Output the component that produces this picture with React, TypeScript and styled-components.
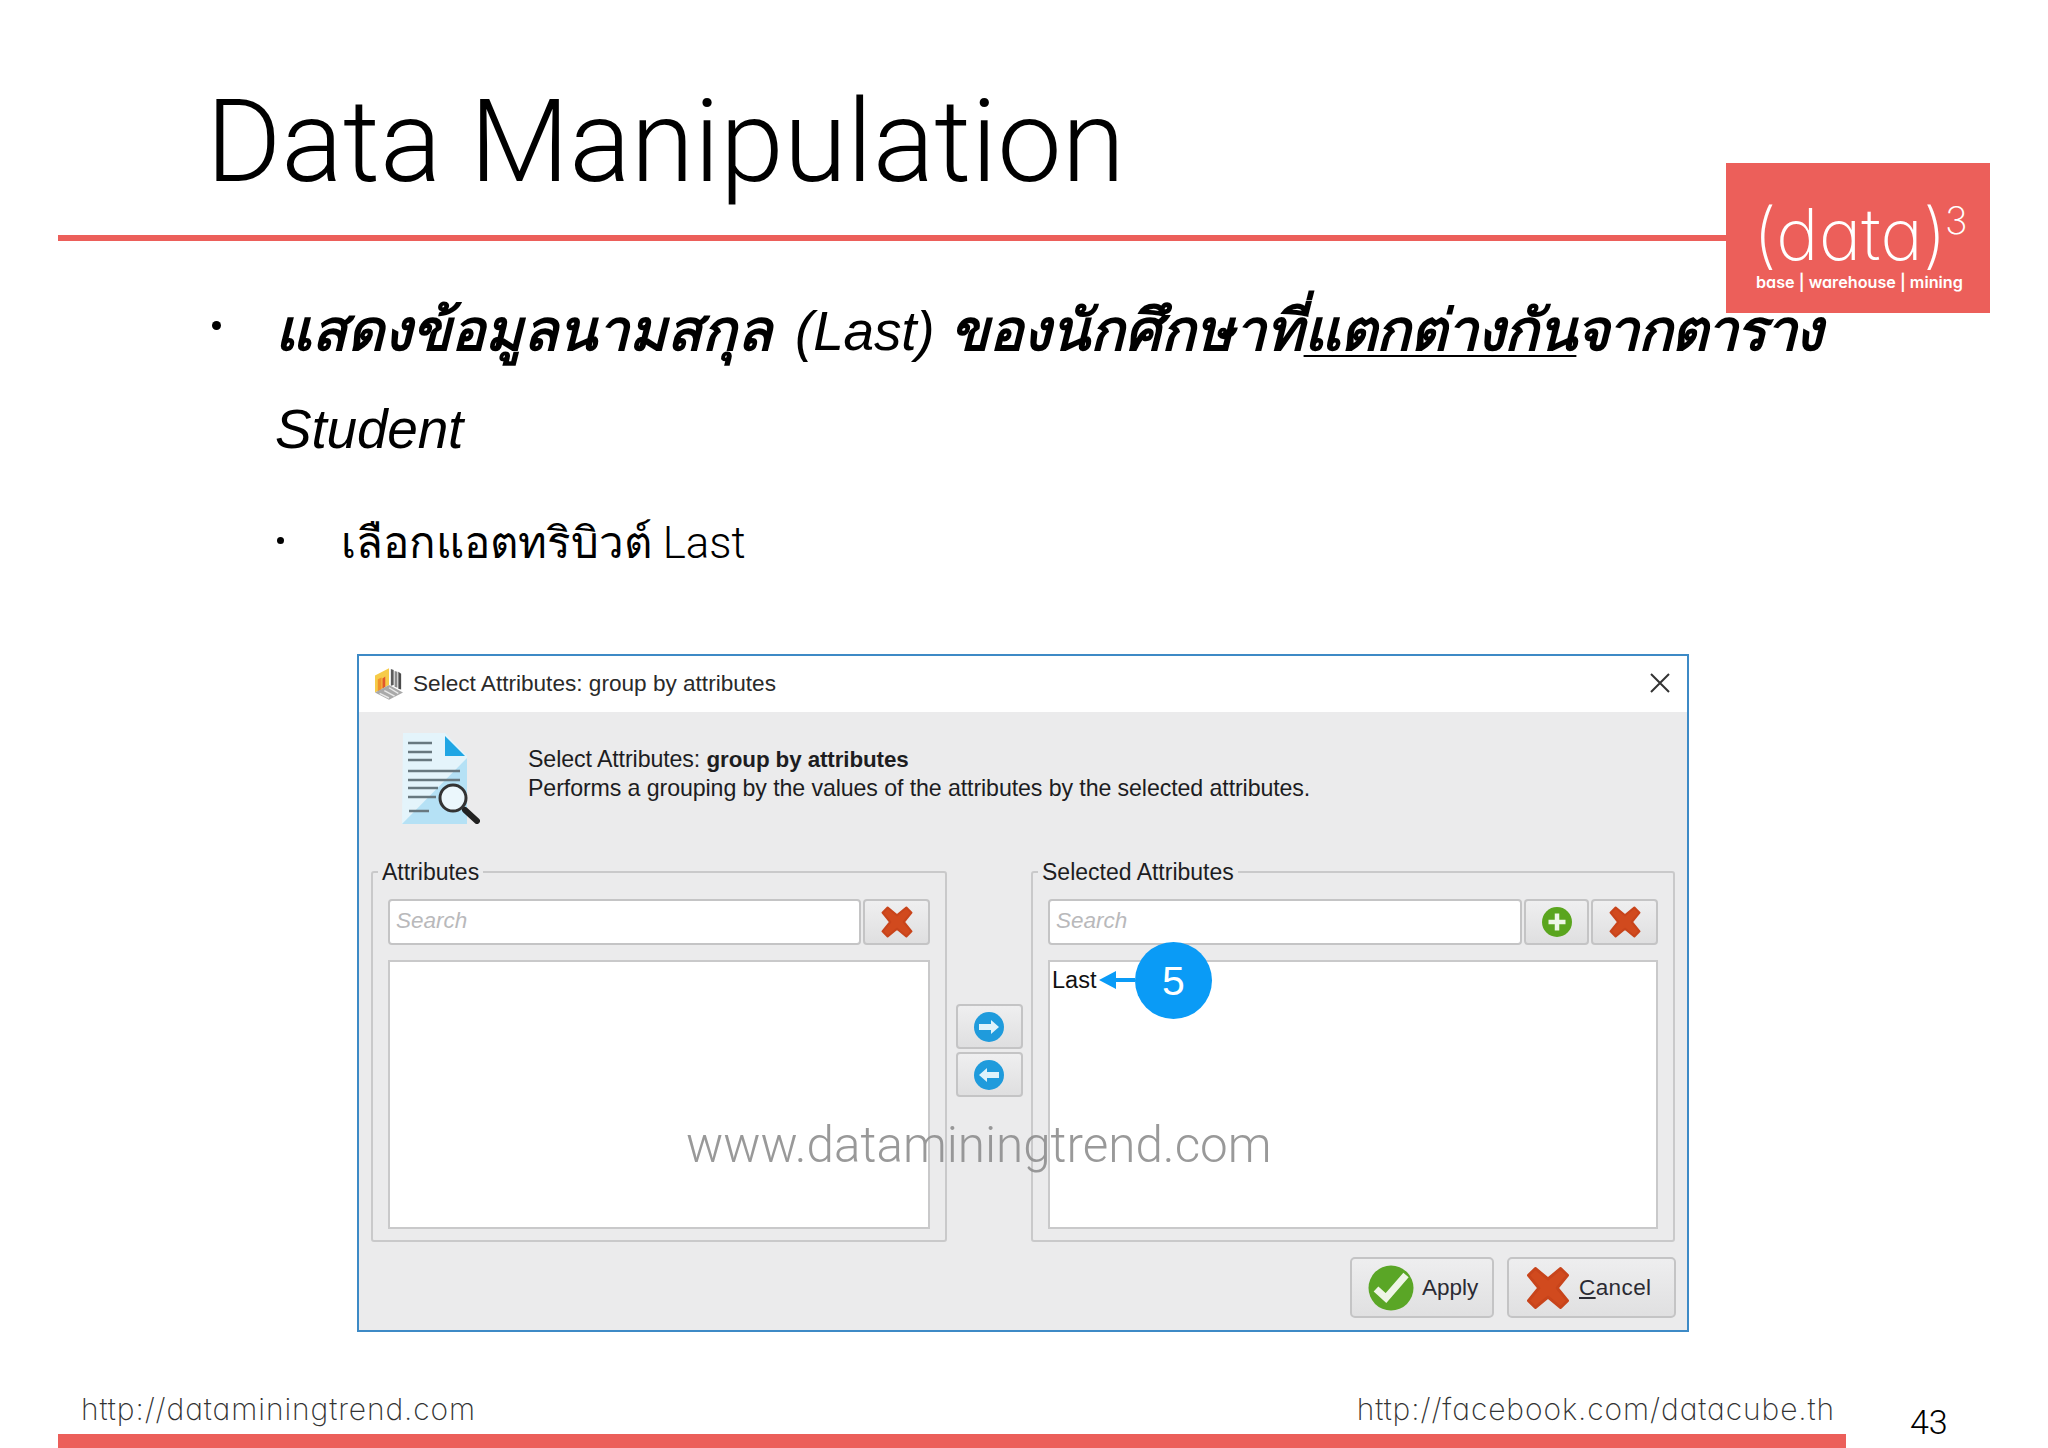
import React from 'react';
import styled, { createGlobalStyle } from 'styled-components';

const CORAL = '#ec5f5a';

const GlobalStyle = createGlobalStyle`
  html, body {
    margin: 0;
    padding: 0;
    background: #fff;
  }
  * {
    box-sizing: border-box;
  }
`;

const Slide = styled.div`
  position: relative;
  width: 2048px;
  height: 1448px;
  overflow: hidden;
  background: #fff;
  color: #000;
  display: flex;
  flex-direction: column;
  font-family: 'Liberation Sans', sans-serif;
`;

const Title = styled.h1`
  margin: 0;
  height: 235px;
  padding: 72px 0 0 206px;
  font-family: Roboto, 'Liberation Sans', sans-serif;
  font-size: 115px;
  line-height: 140px;
  font-weight: 300;
  white-space: nowrap;
`;

const Rule = styled.div`
  margin-left: 58px;
  width: 1668px;
  height: 6px;
  background: ${CORAL};
`;

const Logo = styled.div`
  position: absolute;
  left: 1726px;
  top: 163px;
  width: 264px;
  height: 150px;
  background: ${CORAL};
  color: #fff;
  font-family: Inter, sans-serif;
  font-feature-settings: 'cv11';
`;

const LogoWord = styled.div`
  position: absolute;
  left: 27px;
  top: 35px;
  font-size: 72px;
  line-height: 72px;
  font-weight: 200;
  white-space: nowrap;
`;

const LogoPower = styled.sup`
  position: absolute;
  left: 219px;
  top: 38px;
  font-size: 38px;
  line-height: 38px;
  font-weight: 200;
`;

const LogoTag = styled.div`
  position: absolute;
  left: 30px;
  top: 109px;
  font-size: 16.2px;
  line-height: 20px;
  font-weight: 600;
  white-space: nowrap;
`;

const Bullets = styled.div`
  margin: 40px 0 0 210px;
`;

const MainItem = styled.div`
  display: grid;
  grid-template-columns: 65px auto;
  font-size: 55px;
  line-height: 98px;
  font-style: italic;
  letter-spacing: -0.2px;
  white-space: nowrap;
`;

const SubItem = styled.div`
  display: grid;
  grid-template-columns: 62px auto;
  margin: 34px 0 0 69px;
  font-family: Roboto, 'Liberation Sans', sans-serif;
  font-size: 43.8px;
  font-weight: 300;
  line-height: 62px;
  white-space: nowrap;
`;

const Dot = styled.span<{ $size: number; $top: number; $left: number }>`
  display: block;
  width: ${(p) => p.$size}px;
  height: ${(p) => p.$size}px;
  margin: ${(p) => p.$top}px 0 0 ${(p) => p.$left}px;
  border-radius: 50%;
  background: #000;
`;

const ThaiBold = styled.span<{ $tight?: number }>`
  font-size: 57px;
  font-weight: 700;
  letter-spacing: ${(p) => p.$tight ?? 0}px;
`;

const LatinWord = styled.span`
  margin-left: 8px;
`;

const Under = styled.span`
  text-decoration: underline;
  text-decoration-thickness: 2px;
  text-underline-offset: 5px;
`;

const Dialog = styled.div`
  position: relative;
  width: 1332px;
  height: 678px;
  margin: 80px 0 0 357px;
  border: 2px solid #3d8ac6;
  background: #ebebec;
  display: flex;
  flex-direction: column;
  color: #1d1d1f;
  font-size: 22px;
`;

const TitleBar = styled.div`
  height: 56px;
  background: #fff;
  padding: 0 15px 0 16px;
  display: flex;
  align-items: center;
  gap: 10px;
  font-size: 22.6px;
  color: #2a2a2a;
`;

const TitleText = styled.span`
  flex: 1;
`;

const CloseGlyph = styled.svg`
  margin-top: -3px;
`;

const Intro = styled.div`
  height: 147px;
  display: flex;
  padding: 20px 0 0 41px;
`;

const IntroText = styled.div`
  margin: 13px 0 0 48px;
  font-size: 23.2px;
  line-height: 29px;
  letter-spacing: -0.1px;
`;

const IntroStrong = styled.b`
  font-size: 22.4px;
`;

const Panels = styled.div`
  display: grid;
  grid-template-columns: 576px 84px 644px;
  margin-left: 12px;
  height: 383px;
`;

const Group = styled.fieldset`
  margin: 0;
  min-width: 0;
  padding: 14px 15px 11px;
  border: 2px solid #c9c9ca;
  border-radius: 3px;
  display: flex;
  flex-direction: column;
  gap: 15px;
`;

const GroupLabel = styled.legend`
  margin-left: -10px;
  padding: 0 4px;
  font-size: 23px;
  line-height: 26px;
`;

const SearchRow = styled.div`
  display: flex;
  gap: 2px;
  height: 46px;
`;

const SearchBox = styled.div`
  flex: 1;
  background: #fff;
  border: 2px solid #c4c4c5;
  border-radius: 4px;
  padding-left: 6px;
  font-style: italic;
  font-size: 22.5px;
  line-height: 40px;
  color: #b9b9bb;
`;

const ToolButton = styled.div<{ $width?: number }>`
  width: ${(p) => p.$width ?? 67}px;
  height: 46px;
  display: flex;
  align-items: center;
  justify-content: center;
  border: 2px solid #c4c4c5;
  border-radius: 4px;
  background: linear-gradient(#efeff0, #dfdfe0);
`;

const MoverButton = styled(ToolButton)`
  height: 45px;
`;

const ListBox = styled.div`
  flex: 1;
  position: relative;
  background: #fff;
  border: 2px solid #c9c9ca;
  padding: 5px 2px;
  font-size: 23.5px;
  line-height: 27px;
  color: #111;
`;

const Movers = styled.div`
  display: flex;
  flex-direction: column;
  align-items: center;
  justify-content: center;
  gap: 3px;
`;

const Actions = styled.div`
  display: flex;
  justify-content: flex-end;
  gap: 13px;
  margin: 15px 11px 0 0;
`;

const ActionButton = styled.div<{ $width: number }>`
  width: ${(p) => p.$width}px;
  height: 61px;
  display: flex;
  align-items: center;
  gap: 8px;
  padding-left: 16px;
  border: 2px solid #c4c4c5;
  border-radius: 5px;
  background: linear-gradient(#eeeeef, #e0e0e1);
  font-size: 22.5px;
  color: #2b2b33;
`;

const CancelLabel = styled.span`
  letter-spacing: 0.4px;
`;

const Mnemonic = styled.span`
  text-decoration: underline;
`;

const Badge = styled.div`
  position: absolute;
  left: 85px;
  top: -20px;
  width: 77px;
  height: 77px;
  border-radius: 50%;
  background: #0a9bf6;
  color: #fff;
  font-size: 41px;
  line-height: 79px;
  text-align: center;
`;

const BadgeArrow = styled.svg`
  position: absolute;
  left: 49px;
  top: 8px;
`;

const Watermark = styled.div`
  position: absolute;
  left: 686px;
  top: 1115px;
  font-family: Roboto, sans-serif;
  font-weight: 300;
  font-size: 49.4px;
  line-height: 60px;
  color: #8f8f8f;
  opacity: 0.9;
  white-space: nowrap;
`;

const Footer = styled.div`
  margin-top: auto;
  display: flex;
  align-items: flex-end;
  padding: 0 0 0 58px;
`;

const FooterMain = styled.div`
  width: 1788px;
`;

const FooterLinks = styled.div`
  display: flex;
  justify-content: space-between;
  padding: 0 11px 0 23px;
  font-family: Inter, sans-serif;
  font-feature-settings: 'cv11';
  font-weight: 200;
  font-size: 30px;
  letter-spacing: 0.9px;
  line-height: 36px;
  color: #333;
  margin-bottom: 7px;
`;

const FooterBar = styled.div`
  height: 14px;
  background: ${CORAL};
`;

const PageNumber = styled.div`
  margin: 0 0 6px 64px;
  font-family: Roboto, sans-serif;
  font-weight: 300;
  font-size: 34px;
  line-height: 40px;
`;

const CrossIcon = ({ size }: { size: number }) => (
  <svg width={size} height={size} viewBox="0 0 40 40">
    <path
      d="M9 3 20 12 31 3 37 9 28 20 37 31 31 37 20 28 9 37 3 31 12 20 3 9Z"
      fill="#d14a1e"
      stroke="#c8441b"
      strokeWidth="2.5"
      strokeLinejoin="round"
    />
  </svg>
);

const PlusIcon = () => (
  <svg width="32" height="32" viewBox="0 0 32 32">
    <circle cx="16" cy="16" r="15" fill="#5aa51e" />
    <path d="M16 7.5v17M7.5 16h17" stroke="#eef6e6" strokeWidth="4.5" />
  </svg>
);

const ArrowIcon = ({ left }: { left?: boolean }) => (
  <svg width="32" height="32" viewBox="0 0 32 32">
    <circle cx="16" cy="16" r="15" fill="#1f9bdc" />
    <path
      d={left ? 'M6 16 14 9v4h12v6H14v4Z' : 'M26 16 18 9v4H6v6h12v4Z'}
      fill="#dff3fb"
    />
  </svg>
);

const CheckIcon = () => (
  <svg width="46" height="46" viewBox="0 0 46 46">
    <circle cx="23" cy="23" r="22.5" fill="#5aa626" />
    <path d="M8 24 18 33 38 10" fill="none" stroke="#eef5e6" strokeWidth="7" />
  </svg>
);

const CloseIcon = () => (
  <CloseGlyph width="24" height="24" viewBox="0 0 24 24">
    <path d="M3 3 21 21M21 3 3 21" stroke="#333" strokeWidth="2" />
  </CloseGlyph>
);

const AppIcon = () => (
  <svg width="28" height="32" viewBox="0 0 30 34">
    <path d="M0 8 15 0V18L0 26Z" fill="#f6cb48" />
    <path d="M3 12 7 10V23L3 25Z" fill="#f0922a" />
    <path d="M8 11 11 9V20L8 22Z" fill="#e2572c" />
    <path d="M17 1 20 2V18L17 19Z" fill="#5c5c5c" />
    <path d="M21 3 24 4V21L21 20Z" fill="#8a8a8a" />
    <path d="M25 4 28 6V23L25 22Z" fill="#4c4c4c" />
    <path d="M0 26 15 18 30 26 15 34Z" fill="#a9a9a9" />
    <path d="M5 27 15 32M10 24 21 30M15 21 25 27" stroke="#e8e8e8" strokeWidth="1.5" />
  </svg>
);

const DocIcon = () => (
  <svg width="80" height="92" viewBox="0 0 80 92">
    <path d="M3 1H45L67 24V92H2Z" fill="#e4f4fb" />
    <path d="M2 92 67 26V92Z" fill="#b5e1f5" />
    <path d="M45 4 65 24H45Z" fill="#1fa6e4" />
    <path
      d="M8 11H32M8 20H32M8 28H32M8 39H60M8 48H60M8 56H38M8 65H36M9 79H29"
      stroke="#68787f"
      strokeWidth="2.5"
    />
    <circle cx="53" cy="66" r="13" fill="#f4fafd" fillOpacity="0.85" stroke="#333" strokeWidth="3" />
    <path d="M65 78 77 89" stroke="#222" strokeWidth="6" strokeLinecap="round" />
  </svg>
);

export default function App() {
  return (
    <Slide>
      <GlobalStyle />
      <Title>Data Manipulation</Title>
      <Rule />
      <Logo>
        <LogoWord>(data)</LogoWord>
        <LogoPower>3</LogoPower>
        <LogoTag>base | warehouse | mining</LogoTag>
      </Logo>

      <Bullets>
        <MainItem>
          <Dot $size={9} $top={40} $left={2} />
          <div>
            <ThaiBold>แสดงข้อมูลนามสกุล</ThaiBold> <LatinWord>(Last)</LatinWord>{' '}
            <ThaiBold>ของนักศึกษาที่</ThaiBold>
            <Under>
              <ThaiBold $tight={-0.9}>แตกต่างกัน</ThaiBold>
            </Under>
            <ThaiBold $tight={-1.9}>จากตาราง</ThaiBold>
            <br />
            Student
          </div>
        </MainItem>
        <SubItem>
          <Dot $size={7} $top={25} $left={-2} />
          <div>เลือกแอตทริบิวต์ Last</div>
        </SubItem>
      </Bullets>

      <Dialog>
        <TitleBar>
          <AppIcon />
          <TitleText>Select Attributes: group by attributes</TitleText>
          <CloseIcon />
        </TitleBar>
        <Intro>
          <DocIcon />
          <IntroText>
            Select Attributes: <IntroStrong>group by attributes</IntroStrong>
            <br />
            Performs a grouping by the values of the attributes by the selected attributes.
          </IntroText>
        </Intro>
        <Panels>
          <Group>
            <GroupLabel>Attributes</GroupLabel>
            <SearchRow>
              <SearchBox>Search</SearchBox>
              <ToolButton>
                <CrossIcon size={34} />
              </ToolButton>
            </SearchRow>
            <ListBox />
          </Group>
          <Movers>
            <MoverButton>
              <ArrowIcon />
            </MoverButton>
            <MoverButton>
              <ArrowIcon left />
            </MoverButton>
          </Movers>
          <Group>
            <GroupLabel>Selected Attributes</GroupLabel>
            <SearchRow>
              <SearchBox>Search</SearchBox>
              <ToolButton $width={65}>
                <PlusIcon />
              </ToolButton>
              <ToolButton>
                <CrossIcon size={34} />
              </ToolButton>
            </SearchRow>
            <ListBox>
              Last
              <BadgeArrow width="36" height="20" viewBox="0 0 36 20">
                <path d="M0 10 17 1V8H36V12H17V19Z" fill="#0a9bf6" />
              </BadgeArrow>
              <Badge>5</Badge>
            </ListBox>
          </Group>
        </Panels>
        <Actions>
          <ActionButton $width={144}>
            <CheckIcon />
            Apply
          </ActionButton>
          <ActionButton $width={169}>
            <CrossIcon size={46} />
            <CancelLabel>
              <Mnemonic>C</Mnemonic>ancel
            </CancelLabel>
          </ActionButton>
        </Actions>
      </Dialog>

      <Watermark>www.dataminingtrend.com</Watermark>

      <Footer>
        <FooterMain>
          <FooterLinks>
            <span>http://dataminingtrend.com</span>
            <span>http://facebook.com/datacube.th</span>
          </FooterLinks>
          <FooterBar />
        </FooterMain>
        <PageNumber>43</PageNumber>
      </Footer>
    </Slide>
  );
}
